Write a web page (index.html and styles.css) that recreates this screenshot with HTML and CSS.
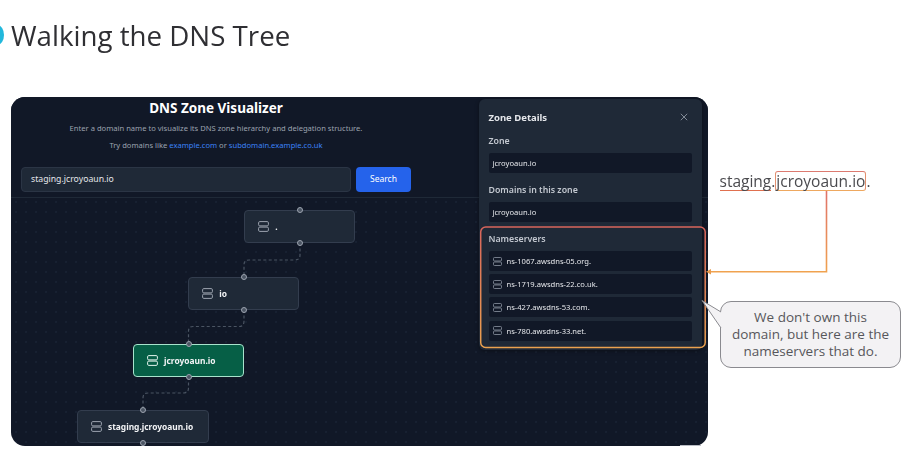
FILE: index.html
```html
<!DOCTYPE html>
<html lang="en">

<head>
    <meta charset="UTF-8">
    <title>Walking the DNS Tree</title>
    <link rel="stylesheet" href="styles.css">
</head>

<body>
    <svg width="0" height="0" class="defs">
        <symbol id="server" viewBox="0 0 11 11">
            <rect x="0.6" y="0.6" width="9.8" height="4.3" rx="1.2" fill="none" stroke="currentColor" stroke-width="1"/>
            <rect x="0.6" y="6.1" width="9.8" height="4.3" rx="1.2" fill="none" stroke="currentColor" stroke-width="1"/>
        </symbol>
    </svg>
    <div class="slide">
        <span class="bullet"></span>
        <h1>Walking the DNS Tree</h1>

        <div class="app">
            <header class="top">
                <div class="intro">
                    <h2>DNS Zone Visualizer</h2>
                    <p>Enter a domain name to visualize its DNS zone hierarchy and delegation structure.</p>
                    <p>Try domains like <a>example.com</a> or <a>subdomain.example.co.uk</a></p>
                    <div class="search">
                        <div class="input">staging.jcroyoaun.io</div>
                        <div class="btn">Search</div>
                    </div>
                </div>
            </header>

            <!-- graph nodes sit on a free canvas -->
            <svg class="edges" width="697" height="349" viewBox="0 0 697 349">
                <g fill="none" stroke="#4b5563" stroke-width="1.2" stroke-dasharray="3 2.4">
                    <path d="M289 146V158Q289 163 284 163H238Q233 163 233 168V180"/>
                    <path d="M233 213V224Q233 229.500 228 229.500H182Q177.500 229.500 177.500 234V247"/>
                    <path d="M177.500 280V291Q177.500 296 172 296H137Q132 296 132 301V313"/>
                </g>
            </svg>
            <div class="node n-root"><svg class="ico"><use href="#server"/></svg><b>.</b></div>
            <div class="node n-io"><svg class="ico"><use href="#server"/></svg><b>io</b></div>
            <div class="node n-zone"><svg class="ico"><use href="#server"/></svg><b>jcroyoaun.io</b></div>
            <div class="node n-sub"><svg class="ico"><use href="#server"/></svg><b>staging.jcroyoaun.io</b></div>

            <aside class="panel">
                <div class="panel-head">
                    <h3>Zone Details</h3>
                    <svg class="close" viewBox="0 0 10 10"><path d="M1 1L9 9M9 1L1 9"/></svg>
                </div>
                <h4>Zone</h4>
                <div class="field">jcroyoaun.io</div>
                <h4>Domains in this zone</h4>
                <div class="field">jcroyoaun.io</div>
                <div class="ns">
                    <h4>Nameservers</h4>
                    <div class="field"><svg class="ico-sm"><use href="#server"/></svg>ns-1067.awsdns-05.org.</div>
                    <div class="field"><svg class="ico-sm"><use href="#server"/></svg>ns-1719.awsdns-22.co.uk.</div>
                    <div class="field"><svg class="ico-sm"><use href="#server"/></svg>ns-427.awsdns-53.com.</div>
                    <div class="field"><svg class="ico-sm"><use href="#server"/></svg>ns-780.awsdns-33.net.</div>
                </div>
            </aside>
        </div>

        <!-- annotations drawn over the slide -->
        <div class="domain"><span class="under">staging</span>.<span class="boxed">jcroyoaun.io</span>.</div>
        <div class="bubble">We don't own this domain, but here are the nameservers that do.</div>
        <svg class="arrow" width="915" height="463" viewBox="0 0 915 463">
            <defs>
                <linearGradient id="line" gradientUnits="userSpaceOnUse" x1="0" y1="192" x2="0" y2="272">
                    <stop offset="0" stop-color="#e0736a"/>
                    <stop offset="1" stop-color="#f0a24f"/>
                </linearGradient>
                <linearGradient id="frame" gradientUnits="userSpaceOnUse" x1="0" y1="227" x2="0" y2="348">
                    <stop offset="0" stop-color="#d9655c"/>
                    <stop offset="1" stop-color="#eba24f"/>
                </linearGradient>
            </defs>
            <rect x="480.700" y="227" width="224.500" height="120.500" rx="5" fill="none" stroke="url(#frame)" stroke-width="1.500"/>
            <path d="M826.500 191V271.700H710" fill="none" stroke="url(#line)" stroke-width="1.600"/>
            <path d="M706 271.700L711 269V274.500Z" fill="#e89a4c"/>
            <rect x="680" y="445" width="21" height="1" fill="#b9bcc4"/>
            <path d="M702 300.500L721 312V328Z" fill="#f3f2f4"/>
            <path d="M721 312L702 300.500L721 328" fill="none" stroke="#8a8a8f"/>
        </svg>
    </div>
</body>

</html>
```

FILE: styles.css
```css
* {
    padding: 0;
    margin: 0;
    box-sizing: border-box;
}

body {
    background-color: #fff;
    font-family: "Noto Sans", sans-serif;
    overflow: hidden;
}

.defs {
    position: absolute;
}

.slide {
    position: relative;
    width: 915px;
    height: 463px;
    padding: 14px 0 0 11px;
    filter: blur(0.3px);
}

.bullet {
    position: absolute;
    left: -9px;
    top: 25px;
    width: 13px;
    height: 20px;
    border-radius: 50%;
    background-color: #22b8dc;
}

h1 {
    font-family: "Open Sans", sans-serif;
    font-weight: 400;
    font-size: 27.700px;
    line-height: 42px;
    color: #2f2f33;
    margin-bottom: 41px;
}

.app {
    position: relative;
    width: 697px;
    height: 349px;
    border-radius: 14px;
    overflow: hidden;
    background-color: #111827;
    background-image: radial-gradient(#182132 0.7px, transparent 0.8px);
    background-size: 10px 10px;
}

.top {
    height: 101px;
    background-color: #111827;
    border-bottom: 1px solid #1f2937;
    padding: 2px 10px 0;
}

.intro {
    width: 390px;
    text-align: center;
}

.intro h2 {
    font-size: 13.500px;
    font-weight: 700;
    line-height: 19px;
    color: #fff;
    margin-bottom: 5px;
}

.intro p {
    font-size: 7.600px;
    line-height: 11px;
    color: #9ca3af;
    margin-bottom: 5.500px;
}

.intro a {
    color: #3b82f6;
}

.search {
    display: flex;
    gap: 5px;
    margin-top: 16px;
}

.input {
    flex: 1;
    height: 25px;
    line-height: 23px;
    padding-left: 9px;
    text-align: left;
    font-size: 8.700px;
    color: #e5e7eb;
    background-color: #1f2937;
    border: 1px solid #2b3545;
    border-radius: 4px;
}

.btn {
    width: 55px;
    height: 25px;
    line-height: 24px;
    font-size: 8.500px;
    color: #fff;
    background-color: #2563eb;
    border-radius: 4px;
}

.edges {
    position: absolute;
    left: 0;
    top: 0;
}

.node {
    position: absolute;
    display: flex;
    align-items: center;
    gap: 6px;
    height: 33px;
    padding-left: 13px;
    color: #9ca3af;
    background-color: #1f2937;
    border: 1px solid #333d4e;
    border-radius: 4px;
}

.node b {
    font-size: 8.400px;
    font-weight: 700;
    color: #f3f4f6;
}

/* connection handles, top and bottom of every node */
.node::before,
.node::after {
    content: "";
    position: absolute;
    left: 50%;
    width: 4px;
    height: 4px;
    border-radius: 50%;
    background-color: #4b5563;
    border: 1px solid #9ca3af;
}

.node::before {
    top: -1px;
    transform: translate(-50%, -50%);
}

.node::after {
    bottom: -1px;
    transform: translate(-50%, 50%);
}

.n-root {
    left: 233.300px;
    top: 113px;
    width: 111px;
}

.n-io {
    left: 177.300px;
    top: 180px;
    width: 111px;
}

.n-zone {
    left: 122px;
    top: 247px;
    width: 111px;
    color: #e5f5ee;
    background-color: #065f46;
    border-color: #a7e3cc;
}

.n-sub {
    left: 66px;
    top: 313px;
    width: 131.500px;
}

.ico {
    width: 11px;
    height: 11px;
    flex: none;
}

.ico-sm {
    width: 9px;
    height: 9px;
    flex: none;
    color: #8b93a1;
}

.panel {
    position: absolute;
    left: 467.500px;
    top: 2px;
    width: 223.500px;
    height: 251px;
    padding: 0 10px;
    background-color: #1f2937;
    border-radius: 6px;
    box-shadow: 0 1px 4px rgba(0, 0, 0, .4);
}

.panel-head {
    display: flex;
    justify-content: space-between;
    align-items: center;
    height: 36px;
}

.panel h3 {
    font-size: 9.500px;
    font-weight: 700;
    color: #e5e7eb;
}

.close {
    width: 8px;
    height: 8px;
    margin-right: 4px;
    fill: none;
    stroke: #9ca3af;
    stroke-width: 1;
}

.panel h4 {
    font-size: 8.800px;
    font-weight: 600;
    line-height: 12px;
    color: #c3c8d0;
    margin-bottom: 6px;
}

.field {
    display: flex;
    align-items: center;
    gap: 5px;
    height: 20px;
    padding-left: 4px;
    font-size: 7.600px;
    color: #e5e7eb;
    background-color: #111827;
    border-radius: 2px;
    margin-bottom: 11px;
}

.ns .field {
    margin-bottom: 3.200px;
}

.domain {
    position: absolute;
    left: 719.500px;
    top: 169px;
    font-family: "Open Sans", sans-serif;
    font-size: 15.500px;
    line-height: 24px;
    color: #4a4a4e;
}

.under,
.boxed {
    display: inline-block;
    line-height: 18px;
}

.under {
    border-bottom: 1.500px solid #e0704f;
}

.boxed {
    border: 1px solid #e2906f;
    border-top-color: #dc7a70;
    border-bottom-color: #eea860;
    border-radius: 3px;
}

.arrow {
    position: absolute;
    left: 0;
    top: 0;
    pointer-events: none;
}

.bubble {
    position: absolute;
    left: 720px;
    top: 301px;
    width: 181px;
    height: 67px;
    padding: 7px 8px;
    text-align: center;
    font-family: "Open Sans", sans-serif;
    font-size: 13.500px;
    line-height: 17px;
    color: #57575b;
    background-color: #f3f2f4;
    border: 1px solid #8a8a8f;
    border-radius: 11px;
}
```
